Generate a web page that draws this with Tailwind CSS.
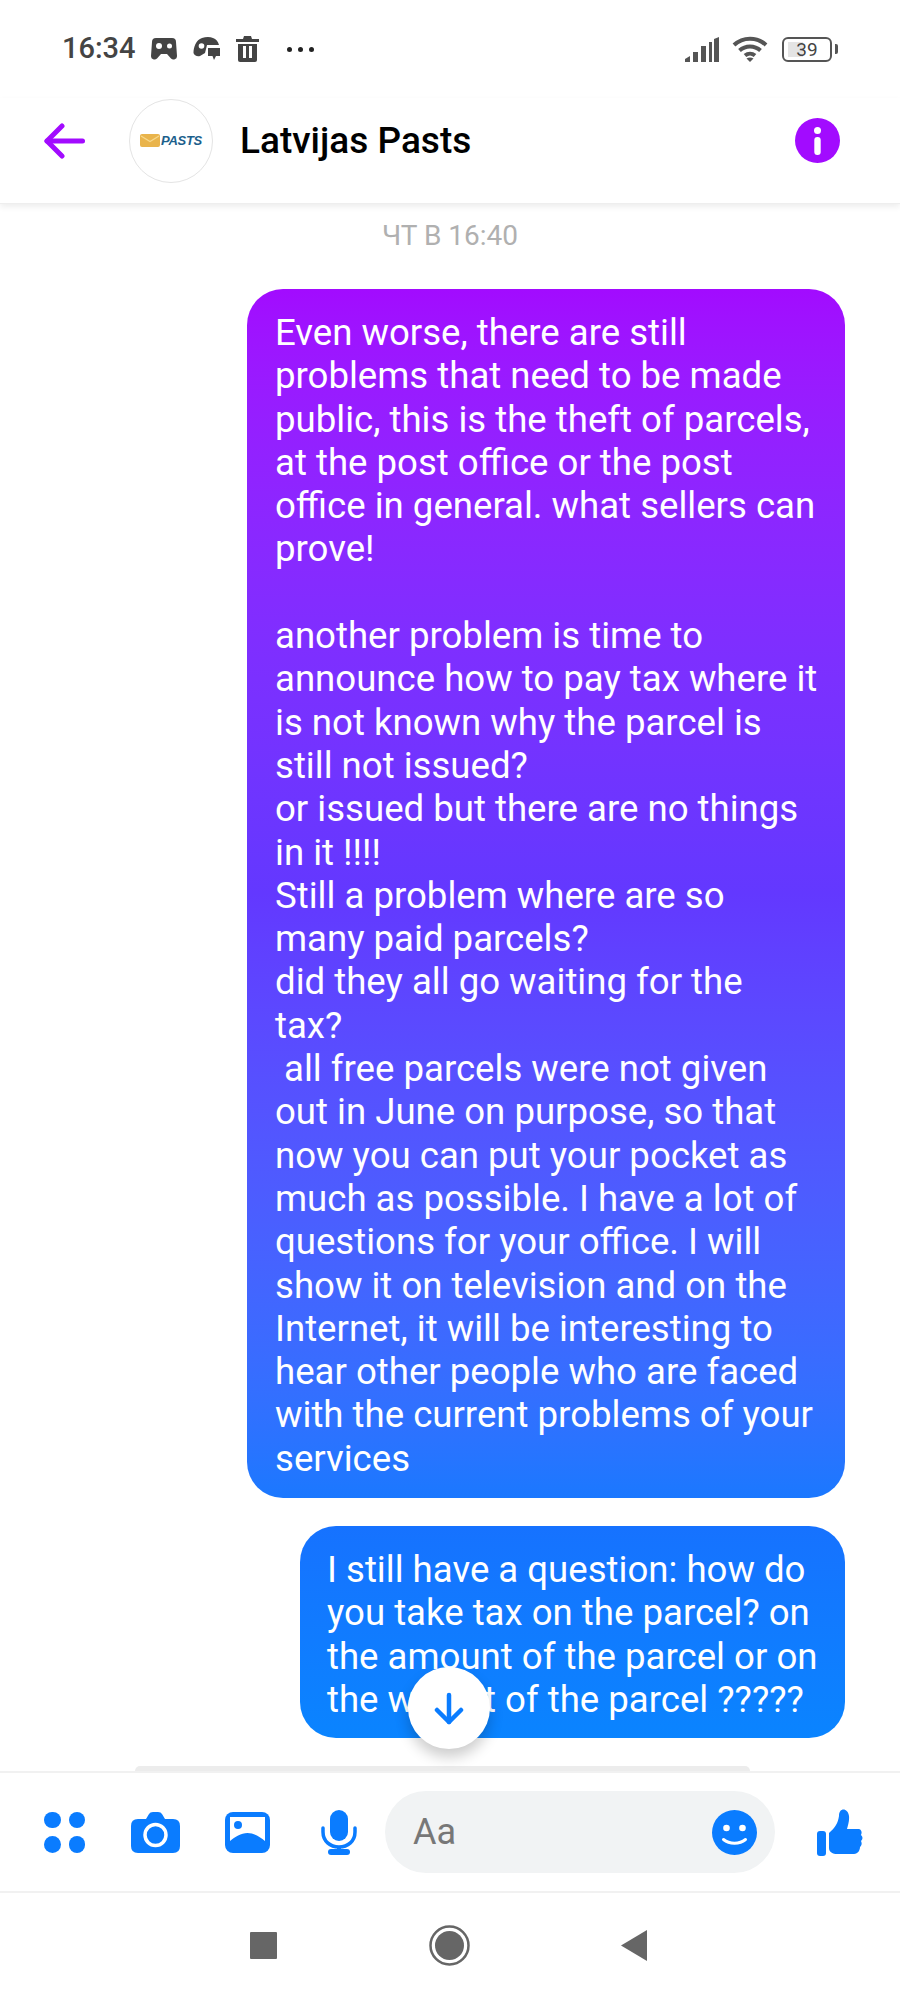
<!DOCTYPE html>
<html lang="en">
<head>
  <meta charset="UTF-8">
  <title>Latvijas Pasts</title>
  <script src="https://cdn.jsdelivr.net/npm/@tailwindcss/browser@4"></script>
</head>
<body class="bg-white font-['Roboto',sans-serif]">
<div class="relative w-[900px] h-[2000px] flex flex-col overflow-hidden bg-white">

  <!-- status bar -->
  <div class="h-[98px] shrink-0 flex items-center pl-[62px] pr-[62px] text-[#444]">
    <span class="text-[29px] font-medium w-[89px]">16:34</span>
    <svg class="w-[26px] h-[22px]" viewBox="0 0 26 22" fill="#444"><path d="M5 0h16a4 4 0 0 1 4 4l1 14a3.500 3.500 0 0 1-6 2.500L16 16h-6l-4 4.500A3.500 3.500 0 0 1 0 18L1 4a4 4 0 0 1 4-4z"/><circle cx="8" cy="8" r="3" fill="#fff"/><circle cx="18.500" cy="8" r="2.500" fill="#fff"/></svg>
    <svg class="w-[27px] h-[24px] ml-[16px]" viewBox="0 0 27 24" fill="#444"><path d="M9 1c4-1.300 8-1.300 11 0 3 1 5 3.500 6 7H14l-2 8-5 3c-3 1-6-1-6.500-3C.500 10 3 3 9 1z"/><circle cx="8.500" cy="9" r="2.800" fill="#fff"/><path d="M15 11h12v8h-4l-2 4-1.500-4H15z"/></svg>
    <svg class="w-[23px] h-[26px] ml-[16px]" viewBox="0 0 23 26" fill="#444"><path d="M0 3h7l1-3h7l1 3h7v3H0z"/><path d="M2 8h19v16a2 2 0 0 1-2 2H4a2 2 0 0 1-2-2z"/><rect x="7" y="10" width="3" height="12" fill="#fff"/><rect x="13" y="10" width="3" height="12" fill="#fff"/></svg>
    <div class="flex gap-[6px] ml-[28px]">
      <span class="w-[5px] h-[5px] rounded-full bg-[#222]"></span>
      <span class="w-[5px] h-[5px] rounded-full bg-[#222]"></span>
      <span class="w-[5px] h-[5px] rounded-full bg-[#222]"></span>
    </div>
    <svg class="w-[34px] h-[25px] ml-auto" viewBox="0 0 34 25" fill="#555"><path d="M0 25v-3l5-3v6z"/><rect x="8" y="15" width="5" height="10"/><rect x="16" y="9" width="5" height="16"/><rect x="24" y="5" width="3" height="20"/><path d="M29 2l5-2v25h-5z"/></svg>
    <svg class="w-[36px] h-[26px] ml-[13px]" viewBox="0 0 36 26" fill="none" stroke="#555" stroke-width="4"><path d="M2 9c9-8.500 23-8.500 32 0"/><path d="M7.500 14.500c6-5.500 15-5.500 21 0"/><path d="M13 19.500c3-2.500 7-2.500 10 0"/><path d="M14.500 22.500L18 26l3.500-3.500c-2-1.500-5-1.500-7 0z" fill="#555" stroke="none"/></svg>
    <div class="relative w-[50px] h-[25px] ml-[14px] border-[2.500px] border-[#555] rounded-[6px] flex items-center justify-center">
      <span class="absolute left-[4px] top-[3px] bottom-[3px] w-[15px] bg-[#e4e4e4]"></span>
      <span class="relative text-[19px] leading-none text-[#444]">39</span>
    </div>
    <span class="w-[3px] h-[10px] ml-[3px] bg-[#555] rounded-r-[2px]"></span>
  </div>

  <!-- header -->
  <div class="relative z-10 h-[106px] shrink-0 flex items-center pl-[44px] pr-[60px] pb-[20px] bg-white border-b border-[#eeeeee] shadow-[0_3px_6px_rgba(0,0,0,0.07)]">
    <svg class="w-[41px] h-[36px]" viewBox="0 0 41 36" fill="none" stroke="#a20bff" stroke-width="5" stroke-linecap="round" stroke-linejoin="round"><path d="M38.500 18H3"/><path d="M18 3L3 18l15 15"/></svg>
    <div class="w-[84px] h-[84px] ml-[44px] rounded-full border border-[#e4e4e4] flex items-center justify-center">
      <svg class="w-[20px] h-[13px]" viewBox="0 0 20 13"><rect width="20" height="13" rx="2" fill="#e9b44c"/><path d="M1 2l9 5.500L19 2" fill="none" stroke="#f8d98c" stroke-width="1.200"/></svg>
      <span class="ml-[1px] text-[13px] leading-none font-bold italic tracking-[-0.3px] text-[#1c5f8c] font-['Liberation_Sans',sans-serif]">PASTS</span>
    </div>
    <span class="ml-[27px] text-[37px] font-medium text-black">Latvijas Pasts</span>
    <svg class="w-[45px] h-[45px] ml-auto" viewBox="0 0 45 45"><circle cx="22.500" cy="22.500" r="22.500" fill="#a20bff"/><circle cx="22.500" cy="12.500" r="3.500" fill="#fff"/><rect x="19.300" y="19" width="6.400" height="18" rx="3" fill="#fff"/></svg>
  </div>

  <!-- chat -->
  <div class="relative flex-1 min-h-0 overflow-hidden flex flex-col items-end pr-[55px] pt-[15px]">
    <p class="self-center pl-[55px] text-[28px] leading-[34px] text-[#b0b0b0]">ЧТ В 16:40</p>

    <div class="w-[598px] h-[1209px] mt-[36px] pl-[28px] pt-[22px] rounded-[36px] bg-gradient-to-b from-[#a20bff] via-[#6338ff] to-[#1a78ff] text-white text-[36.600px] leading-[43.300px] whitespace-nowrap">
      Even worse, there are still<br>
      problems that need to be made<br>
      public, this is the theft of parcels,<br>
      at the post office or the post<br>
      office in general. what sellers can<br>
      prove!<br>
      <br>
      another problem is time to<br>
      announce how to pay tax where it<br>
      is not known why the parcel is<br>
      still not issued?<br>
      or issued but there are no things<br>
      in it !!!!<br>
      Still a problem where are so<br>
      many paid parcels?<br>
      did they all go waiting for the<br>
      tax?<br>
      &nbsp;all free parcels were not given<br>
      out in June on purpose, so that<br>
      now you can put your pocket as<br>
      much as possible. I have a lot of<br>
      questions for your office. I will<br>
      show it on television and on the<br>
      Internet, it will be interesting to<br>
      hear other people who are faced<br>
      with the current problems of your<br>
      services
    </div>

    <div class="w-[545px] h-[212px] mt-[28px] pl-[27px] pt-[22px] rounded-[36px] bg-gradient-to-b from-[#1672ff] to-[#0a84ff] text-white text-[36.600px] leading-[43.300px] whitespace-nowrap">
      I still have a question: how do<br>
      you take tax on the parcel? on<br>
      the amount of the parcel or on<br>
      the weight of the parcel ?????
    </div>

    <!-- next bubble peeking above the composer -->
    <div class="absolute left-[135px] bottom-0 w-[615px] h-[5px] rounded-t-[30px] bg-[#ececec]"></div>

    <!-- scroll to bottom -->
    <button class="absolute left-[408px] top-[1463px] w-[82px] h-[82px] rounded-full bg-white shadow-[0_8px_14px_rgba(0,0,0,0.2)] flex items-center justify-center">
      <svg class="w-[30px] h-[33px]" viewBox="0 0 30 33" fill="none" stroke="#0a7cff" stroke-width="4.500" stroke-linecap="round" stroke-linejoin="round"><path d="M15 3v27"/><path d="M3 18l12 12 12-12"/></svg>
    </button>
  </div>

  <!-- composer -->
  <div class="h-[122px] shrink-0 flex items-center pl-[44px] border-t-2 border-b-2 border-[#f1f1f1] bg-white">
    <div class="w-[41px] grid grid-cols-2 gap-[8px]">
      <span class="w-[16.500px] h-[16.500px] rounded-full bg-[#0a7cff]"></span>
      <span class="w-[16.500px] h-[16.500px] rounded-full bg-[#0a7cff]"></span>
      <span class="w-[16.500px] h-[16.500px] rounded-full bg-[#0a7cff]"></span>
      <span class="w-[16.500px] h-[16.500px] rounded-full bg-[#0a7cff]"></span>
    </div>
    <svg class="w-[49px] h-[41px] ml-[46px]" viewBox="0 0 49 41"><path d="M7 7h8l3-5q1-2 4-2h5q3 0 4 2l3 5h8q7 0 7 7v20q0 7-7 7H7q-7 0-7-7V14q0-7 7-7z" fill="#0a7cff"/><circle cx="24.500" cy="23" r="10.500" fill="none" stroke="#fff" stroke-width="3.500"/></svg>
    <svg class="w-[45px] h-[41px] ml-[45px]" viewBox="0 0 45 41"><rect width="45" height="41" rx="8" fill="#0a7cff"/><path d="M5 5h35v24c-5-4-11-8-17.500-8S10 25 5 29z" fill="#fff"/><circle cx="13" cy="13" r="4" fill="#0a7cff"/></svg>
    <svg class="w-[36px] h-[45px] ml-[51px]" viewBox="0 0 36 45"><rect x="9" y="0" width="18" height="31" rx="9" fill="#0a7cff"/><path d="M2 18v4c0 9 7 15 16 15s16-6 16-15v-4" fill="none" stroke="#0a7cff" stroke-width="3.500" stroke-linecap="round"/><rect x="16" y="36" width="4" height="6" fill="#0a7cff"/><rect x="7" y="39" width="22" height="6" rx="3" fill="#0a7cff"/></svg>
    <div class="w-[390px] h-[82px] ml-[28px] pl-[28px] pr-[18px] rounded-full bg-[#f1f3f4] flex items-center justify-between">
      <span class="text-[36px] text-[#777777]">Aa</span>
      <svg class="w-[45px] h-[45px]" viewBox="0 0 45 45"><circle cx="22.500" cy="22.500" r="22.500" fill="#0a7cff"/><circle cx="14.500" cy="18" r="3.300" fill="#fff"/><circle cx="30.500" cy="18" r="3.300" fill="#fff"/><path d="M11.500 29.500c6 5 16 5 22 0" fill="none" stroke="#fff" stroke-width="3" stroke-linecap="round"/></svg>
    </div>
    <svg class="w-[46px] h-[47px] ml-[42px]" viewBox="0 0 46 47" fill="#0a7cff"><rect x="0" y="22" width="9" height="25" rx="3"/><path d="M12 24c6-5 9-10 10-17 0-9 9-8 10 0 .500 5-1 9-2 13h12c3 1 3 4 2 6 2 2 2 4 0 6 1 2 1 4-1 6 0 3-2 7-6 7H20c-4 0-8-2-8-6z"/></svg>
  </div>

  <!-- nav bar -->
  <div class="flex-none h-[107px] flex items-center justify-center bg-white pb-[2px] pr-[3px]">
    <span class="w-[27px] h-[27px] bg-[#666] rounded-[1px]"></span>
    <svg class="w-[41px] h-[41px] ml-[152px]" viewBox="0 0 41 41"><circle cx="20.500" cy="20.500" r="19" fill="none" stroke="#666" stroke-width="2.500"/><circle cx="20.500" cy="20.500" r="14.500" fill="#666"/></svg>
    <svg class="w-[26px] h-[31px] ml-[151px]" viewBox="0 0 26 31"><path d="M26 0v31L0 15.500z" fill="#666"/></svg>
  </div>
</div>
</body>
</html>
